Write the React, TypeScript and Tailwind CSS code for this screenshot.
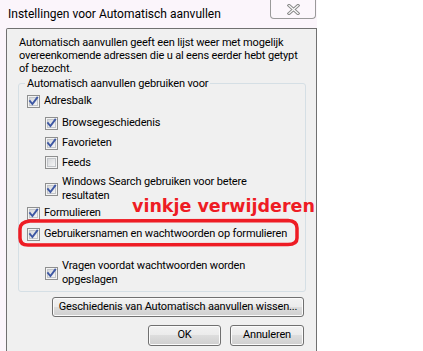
import { useId } from "react";

type CheckProps = { checked?: boolean };

function WinCheck({ checked = true }: CheckProps) {
  const id = useId();
  return (
    <svg width="13" height="13" viewBox="0 0 13 13" className="shrink-0">
      <defs>
        <linearGradient id={id} x1="0" y1="0" x2="1" y2="1">
          <stop offset="0" stopColor="#d4d6d9" />
          <stop offset="1" stopColor="#f7f7f7" />
        </linearGradient>
      </defs>
      <rect x="0.5" y="0.5" width="12" height="12" fill="#f4f4f4" stroke="#8e8f8f" />
      <rect x="2.5" y="2.5" width="8" height="8" fill={`url(#${id})`} stroke="#c2c5c9" />
      {checked && (
        <path d="M3 6.2 L5.4 9 L10.2 2.6" fill="none" stroke="#3d57a3" strokeWidth="1.9" strokeLinecap="square" />
      )}
    </svg>
  );
}

function CheckRow({
  label,
  checked = true,
  indent = false,
  className = "",
}: {
  label: React.ReactNode;
  checked?: boolean;
  indent?: boolean;
  className?: string;
}) {
  return (
    <div className={`flex items-center ${indent ? "pl-[26px]" : "pl-[8px]"} ${className}`}>
      <WinCheck checked={checked} />
      <span className="ml-[4px] whitespace-nowrap leading-[14px]">{label}</span>
    </div>
  );
}

function WinButton({ children, className = "" }: { children: React.ReactNode; className?: string }) {
  return (
    <button
      type="button"
      className={`flex items-center justify-center whitespace-nowrap rounded-[3px] border border-[#707070] bg-[linear-gradient(#f2f2f2_0%,#ebebeb_50%,#dddddd_50%,#cfcfcf_100%)] text-black shadow-[inset_0_0_0_1px_#fbfbfb] ${className}`}
    >
      {children}
    </button>
  );
}

export default function App() {
  return (
    <div className="relative h-[351px] w-[423px] overflow-hidden bg-white font-['Roboto',sans-serif] text-[11px] tracking-[-0.15px] text-black">
      <div className="flex h-[351px] w-[317px] flex-col bg-[#fbf5fb]">
        {/* title bar */}
        <div className="flex h-[28px] shrink-0 items-start">
          <span className="ml-[8px] mt-[7px] text-[12px] leading-[14px] tracking-normal">
            Instellingen voor Automatisch aanvullen
          </span>
          <div className="ml-auto mr-[1px] flex h-[19px] w-[46px] items-center justify-center rounded-b-[4px] border border-t-0 border-[#9a9a9a] bg-[#fcf7fc]">
            <svg width="13" height="11" viewBox="0 0 13 11">
              <path d="M2 1.5 L11 9.5 M11 1.5 L2 9.5" stroke="#8a8a8a" strokeWidth="3.2" strokeLinecap="square" />
              <path d="M2 1.5 L11 9.5 M11 1.5 L2 9.5" stroke="#fdfdfd" strokeWidth="1.2" strokeLinecap="square" />
            </svg>
          </div>
        </div>

        {/* body */}
        <div className="ml-[6px] flex-1 rounded-tl-[2px] border border-b-0 border-[#707070] bg-[#f0f0f0] pt-[7px]">
          <p className="whitespace-nowrap pl-[12px] leading-[13px]">
            Automatisch aanvullen geeft een lijst weer met mogelijk
            <br />
            overeenkomende adressen die u al eens eerder hebt getypt
            <br />
            of bezocht.
          </p>

          <fieldset className="ml-[11px] mt-[2px] w-[288px] rounded-[3px] border border-[#d5dfe5] pb-[4px]">
            <legend className="ml-[6px] px-[2px] leading-[13px]">Automatisch aanvullen gebruiken voor</legend>
            <CheckRow label="Adresbalk" className="mt-[1px] h-[20px]" />
            <CheckRow label="Browsegeschiedenis" indent className="mt-[2px] h-[20px]" />
            <CheckRow label="Favorieten" indent className="h-[20px]" />
            <CheckRow label="Feeds" checked={false} indent className="h-[19px]" />
            <CheckRow
              indent
              className="mt-[3px] h-[28px]"
              label={
                <>
                  Windows Search gebruiken voor betere
                  <br />
                  resultaten
                </>
              }
            />
            <CheckRow label="Formulieren" className="h-[20px]" />
            <CheckRow label="Gebruikersnamen en wachtwoorden op formulieren" className="mt-[1px] h-[20px]" />
            <CheckRow
              indent
              className="mt-[15px] h-[28px]"
              label={
                <>
                  Vragen voordat wachtwoorden worden
                  <br />
                  opgeslagen
                </>
              }
            />
          </fieldset>

          <div className="mt-[5px] flex justify-end pr-[12px]">
            <WinButton className="h-[20px] w-[252px]">Geschiedenis van Automatisch aanvullen wissen...</WinButton>
          </div>
          <div className="mt-[8px] flex justify-end gap-[9px] pr-[12px]">
            <WinButton className="h-[21px] w-[73px]">OK</WinButton>
            <WinButton className="h-[21px] w-[74px]">Annuleren</WinButton>
          </div>
        </div>
      </div>

      {/* red annotation */}
      <span className="absolute left-[132px] top-[195px] font-['DejaVu_Sans',sans-serif] text-[17.5px] font-bold leading-[22px] tracking-normal text-[#ee1c24]">
        vinkje verwijderen
      </span>
      <svg className="pointer-events-none absolute left-0 top-0" width="423" height="351">
        <path
          d="M30 221 L288 220.5 Q297 221 297 228 L297 238 Q297 244.5 288 244.5 L28 245 Q20 245 20 238 L20 229 Q20 222 30 221 Z"
          fill="none"
          stroke="#ee1c24"
          strokeWidth="3.5"
        />
      </svg>
    </div>
  );
}
